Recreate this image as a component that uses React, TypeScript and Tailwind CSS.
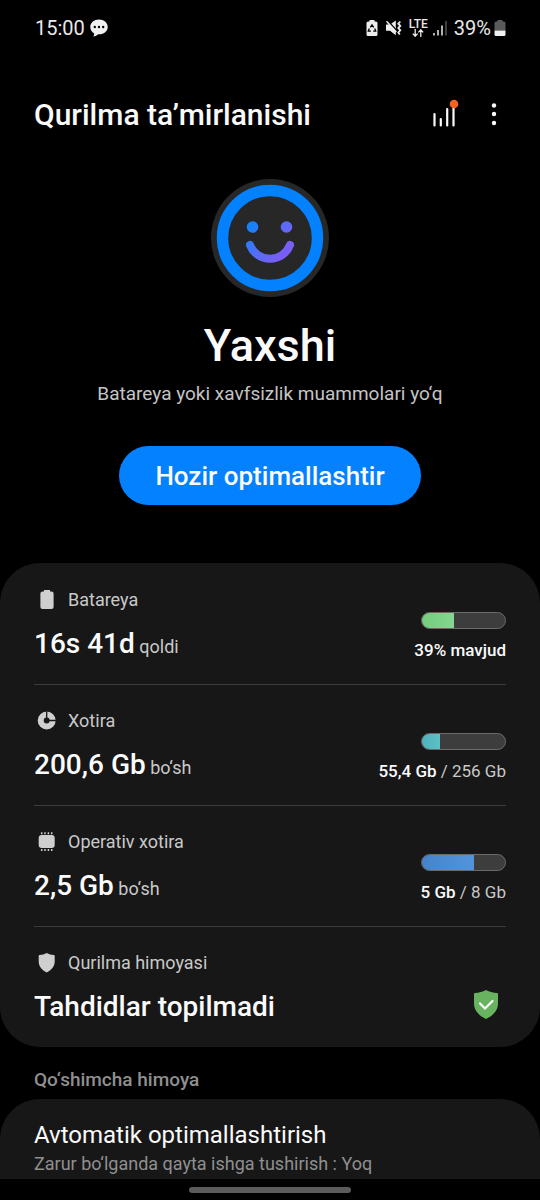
import type { ReactNode } from "react";

interface UsageBarProps {
  label: string;
  percent: number;
  fill: string;
}

const UsageBar = ({ label, percent, fill }: UsageBarProps) => (
  <div
    role="progressbar"
    aria-label={label}
    aria-valuenow={percent}
    aria-valuemin={0}
    aria-valuemax={100}
    className="h-[17px] w-[85px] overflow-hidden rounded-full border border-[#6b6b6b] bg-[#3d3d3d]"
  >
    <div className={`h-full ${fill}`} style={{ width: `${percent}%` }} />
  </div>
);

interface StatRowProps {
  icon: ReactNode;
  label: string;
  value: string;
  suffix?: string;
  children: ReactNode;
}

const StatRow = ({ icon, label, value, suffix, children }: StatRowProps) => (
  <li className="flex items-end justify-between border-b border-[#3c3c3c] pt-6 pb-[22px] last:border-b-0">
    <div>
      <div className="flex items-center gap-[9px]">
        {icon}
        <h2 className="text-[18px] leading-6 text-[#c9c9c9]">{label}</h2>
      </div>
      <p className="mt-[14px] text-[28px] leading-9 font-medium text-[#fafafa]">
        {value}
        {suffix && <span className="text-[18px] leading-6 font-normal text-[#c9c9c9]"> {suffix}</span>}
      </p>
    </div>
    <div className="flex flex-col items-end gap-[9px]">{children}</div>
  </li>
);

const BatteryIcon = () => (
  <svg viewBox="0 0 25 24" className="h-6 w-[25px]" fill="#cfcfcf" aria-hidden="true">
    <path d="M10 2h6v1.600h1.600a2 2 0 0 1 2 2V19a2 2 0 0 1-2 2H8.400a2 2 0 0 1-2-2V5.600a2 2 0 0 1 2-2H10z" />
  </svg>
);

const StorageIcon = () => (
  <svg viewBox="0 0 25 24" className="h-6 w-[25px]" aria-hidden="true">
    <circle cx="12.700" cy="11.500" r="6" fill="none" stroke="#cfcfcf" strokeWidth="6" />
    <path d="M12.700 1.500v8M14.700 11.500h8" stroke="#171717" strokeWidth="1.300" />
  </svg>
);

const MemoryIcon = () => (
  <svg viewBox="0 0 25 24" className="h-6 w-[25px]" aria-hidden="true">
    <rect x="4.700" y="5" width="16" height="13" rx="3" fill="#cfcfcf" />
    <path
      d="M7.700 2.200v2M11 2.200v2M14.400 2.200v2M17.700 2.200v2M7.700 19v2M11 19v2M14.400 19v2M17.700 19v2"
      stroke="#cfcfcf"
      strokeWidth="1.500"
    />
  </svg>
);

const ShieldIcon = () => (
  <svg viewBox="0 0 25 24" className="h-6 w-[25px]" fill="#cfcfcf" aria-hidden="true">
    <path d="M12.700 2c2.200 1.300 4.600 1.900 7.200 2 .5 0 .8.400.8.800v5.600c0 5-3.300 8.700-8 11-4.700-2.300-8-6-8-11V4.800c0-.4.300-.8.800-.8 2.600-.1 5-.7 7.200-2z" />
  </svg>
);

const StatusBar = () => (
  <div className="flex h-14 items-center justify-between pr-[34px] pl-[35px] text-[20px] text-[#e8e8e8]">
    <div className="flex items-center gap-[5px]">
      <span>15:00</span>
      <svg viewBox="0 0 18 18" className="size-[18px]" aria-hidden="true">
        <path
          d="M9 .5c4.900 0 8.700 3.200 8.700 7.400S13.900 15.300 9 15.300h-.8C7 16.600 5.300 17.300 3.300 17.400c.7-.9 1-1.900.9-3C1.800 13 .3 10.600.3 7.900.3 3.700 4.100.5 9 .5z"
          fill="#f0f0f0"
        />
        <g fill="#000">
          <circle cx="4.800" cy="8" r="1.200" />
          <circle cx="9" cy="8" r="1.200" />
          <circle cx="13.200" cy="8" r="1.200" />
        </g>
      </svg>
    </div>

    <div className="flex items-center">
      <svg viewBox="0 0 12 16" className="mr-2 h-4 w-3" aria-hidden="true">
        <path d="M3.500 0h5v1.500H10a1.500 1.500 0 0 1 1.500 1.500v11.500A1.500 1.500 0 0 1 10 16H2a1.500 1.500 0 0 1-1.500-1.500V3A1.500 1.500 0 0 1 2 1.500h1.500z" fill="#ececec" />
        <path
          d="M4.300 7.400 6 4.900l1.700 2.500M8.700 8.500l1 2.600H7.300M4.900 11.100H2.300l1-2.600"
          fill="none"
          stroke="#000"
          strokeWidth="1.300"
        />
      </svg>
      <svg viewBox="0 0 16 16" className="mr-[7px] size-4" aria-hidden="true">
        <path d="M0 4.500h4L9.800.500v14.800L4 10.800H0z" fill="#ececec" />
        <path d="M1.500.500 11 11" stroke="#000" strokeWidth="1.600" />
        <path d="M0 0h5L0 4.500z" fill="#000" />
        <path d="M.5 1.300 10.300 12" stroke="#ececec" strokeWidth="1.500" />
        <path
          d="m14.300 1.500-2 2.200 2 2.200-2 2.200 2 2.200-2 2.200 1.500 2"
          fill="none"
          stroke="#ececec"
          strokeWidth="1.800"
        />
      </svg>
      <div className="mr-[5px] flex flex-col items-center">
        <span className="text-[12px] leading-[9px] font-medium">LTE</span>
        <svg viewBox="0 0 12 8" className="h-2 w-3" fill="none" stroke="#ececec" strokeWidth="1.300" aria-hidden="true">
          <path d="M3.200 0v7M.8 4.600l2.400 2.600 2.400-2.600M8.800 8V1M6.400 3.400 8.800.8l2.400 2.600" />
        </svg>
      </div>
      <svg viewBox="0 0 14 15" className="mr-[7px] h-[15px] w-[14px]" strokeWidth="1.500" aria-hidden="true">
        <path d="M1 12v2.500M5 9v5.500M9 4.500v10" stroke="#ececec" />
        <path d="M13 0v14.500" stroke="#555" />
      </svg>
      <span>39%</span>
      <svg viewBox="0 0 12 16" className="ml-[3px] h-4 w-3" aria-hidden="true">
        <path d="M3.500 0h5v1.500H10A1.500 1.500 0 0 1 11.500 3v7.500H.5V3A1.500 1.500 0 0 1 2 1.500h1.500z" fill="#5a5a5a" />
        <path d="M.5 10.500h11v4A1.500 1.500 0 0 1 10 16H2a1.500 1.500 0 0 1-1.500-1.500z" fill="#f0f0f0" />
      </svg>
    </div>
  </div>
);

const SmileyBadge = () => (
  <svg viewBox="0 0 118 118" className="size-[118px]" role="img" aria-label="Yaxshi">
    <defs>
      <linearGradient id="smile" gradientUnits="userSpaceOnUse" x1="40" y1="42" x2="82" y2="78">
        <stop offset="0" stopColor="#0d84fb" />
        <stop offset="0.500" stopColor="#5a6bf8" />
        <stop offset="1" stopColor="#8658f8" />
      </linearGradient>
    </defs>
    <circle cx="59" cy="59" r="59" fill="#272727" />
    <circle cx="59" cy="59" r="47.500" fill="none" stroke="#0381fe" strokeWidth="11.500" />
    <g fill="url(#smile)">
      <circle cx="41.500" cy="48" r="5.800" />
      <circle cx="75.500" cy="48" r="5.800" />
    </g>
    <path d="M39 66a21.400 21.400 0 0 0 40 0" fill="none" stroke="url(#smile)" strokeWidth="8" strokeLinecap="round" />
  </svg>
);

export default function App() {
  return (
    <div className="flex min-h-screen flex-col bg-black font-[Roboto,sans-serif] text-[#fafafa]">
      <StatusBar />

      <header className="flex items-center justify-between pt-[35px] pr-8 pl-[34px]">
        <h1 className="text-[30px] leading-12 font-medium">Qurilma ta’mirlanishi</h1>
        <div className="flex items-center gap-[21px]">
          <button type="button" aria-label="Statistika">
            <svg viewBox="0 0 28 32" className="h-8 w-7" aria-hidden="true">
              <path
                d="M3.500 15v11.500M9.800 20v6.500M16.200 10v16.500M22.500 8v18.500"
                stroke="#fafafa"
                strokeWidth="2.200"
                strokeLinecap="round"
              />
              <circle cx="23" cy="5" r="4.300" fill="#f0641e" />
            </svg>
          </button>
          <button type="button" aria-label="Yana">
            <svg viewBox="0 0 28 32" className="h-8 w-7" fill="#fafafa" aria-hidden="true">
              <circle cx="14" cy="6.500" r="2.200" />
              <circle cx="14" cy="15" r="2.200" />
              <circle cx="14" cy="24" r="2.200" />
            </svg>
          </button>
        </div>
      </header>

      <section className="flex flex-col items-center px-6 pt-10 pb-[58px] text-center">
        <SmileyBadge />
        <p className="mt-[21px] text-[45px] leading-14 font-medium">Yaxshi</p>
        <p className="mt-2 text-[19px] leading-6 text-[#c4c4c4]">Batareya yoki xavfsizlik muammolari yo‘q</p>
        <button
          type="button"
          className="mt-10 rounded-full bg-[#0381fe] px-9 pt-[14px] pb-[13px] text-[26px] leading-8 font-medium"
        >
          Hozir optimallashtir
        </button>
      </section>

      <ul className="rounded-[40px] bg-[#171717] px-[34px] pt-px">
        <StatRow icon={<BatteryIcon />} label="Batareya" value="16s 41d" suffix="qoldi">
          <UsageBar label="Batareya" percent={39} fill="bg-linear-to-r from-[#74cd7f] to-[#84d78f]" />
          <p className="text-[17px] leading-6 font-medium">39% mavjud</p>
        </StatRow>
        <StatRow icon={<StorageIcon />} label="Xotira" value="200,6 Gb" suffix="bo‘sh">
          <UsageBar label="Xotira" percent={22} fill="bg-linear-to-r from-[#4fb3c0] to-[#5cc0c4]" />
          <p className="text-[17px] leading-6 text-[#c9c9c9]">
            <span className="font-medium text-[#fafafa]">55,4 Gb</span> / 256 Gb
          </p>
        </StatRow>
        <StatRow icon={<MemoryIcon />} label="Operativ xotira" value="2,5 Gb" suffix="bo‘sh">
          <UsageBar label="Operativ xotira" percent={63} fill="bg-linear-to-r from-[#4584cb] to-[#5294dc]" />
          <p className="text-[17px] leading-6 text-[#c9c9c9]">
            <span className="font-medium text-[#fafafa]">5 Gb</span> / 8 Gb
          </p>
        </StatRow>
        <StatRow icon={<ShieldIcon />} label="Qurilma himoyasi" value="Tahdidlar topilmadi">
          <svg viewBox="0 0 40 36" className="h-9 w-10" role="img" aria-label="Himoyalangan">
            <path
              d="M20 1c3.300 1.800 7 2.800 11 3 .6 0 1 .5 1 1v9.500c0 7-4.800 12-12 15.500C12.800 26.500 8 21.500 8 14.500V5c0-.5.400-1 1-1 4-.2 7.700-1.200 11-3z"
              fill="#68b35f"
            />
            <path d="m14 14.500 5 5 7.500-7.500" fill="none" stroke="#fafafa" strokeWidth="2.200" strokeLinecap="round" />
          </svg>
        </StatRow>
      </ul>

      <h2 className="px-[34px] pt-[21px] pb-[7px] text-[19px] leading-6 font-medium text-[#8f8f8f]">
        Qo‘shimcha himoya
      </h2>

      <section className="grow rounded-t-[40px] bg-[#171717] px-[34px] pt-5 pb-[2px]">
        <h3 className="text-[24px] leading-8">Avtomatik optimallashtirish</h3>
        <p className="mt-px text-[18px] leading-6 text-[#8f8f8f]">Zarur bo‘lganda qayta ishga tushirish : Yoq</p>
      </section>

      <div className="flex justify-center pt-2 pb-[7px]">
        <div className="h-[6px] w-3/10 rounded-full bg-[#5c5c5c]" />
      </div>
    </div>
  );
}
